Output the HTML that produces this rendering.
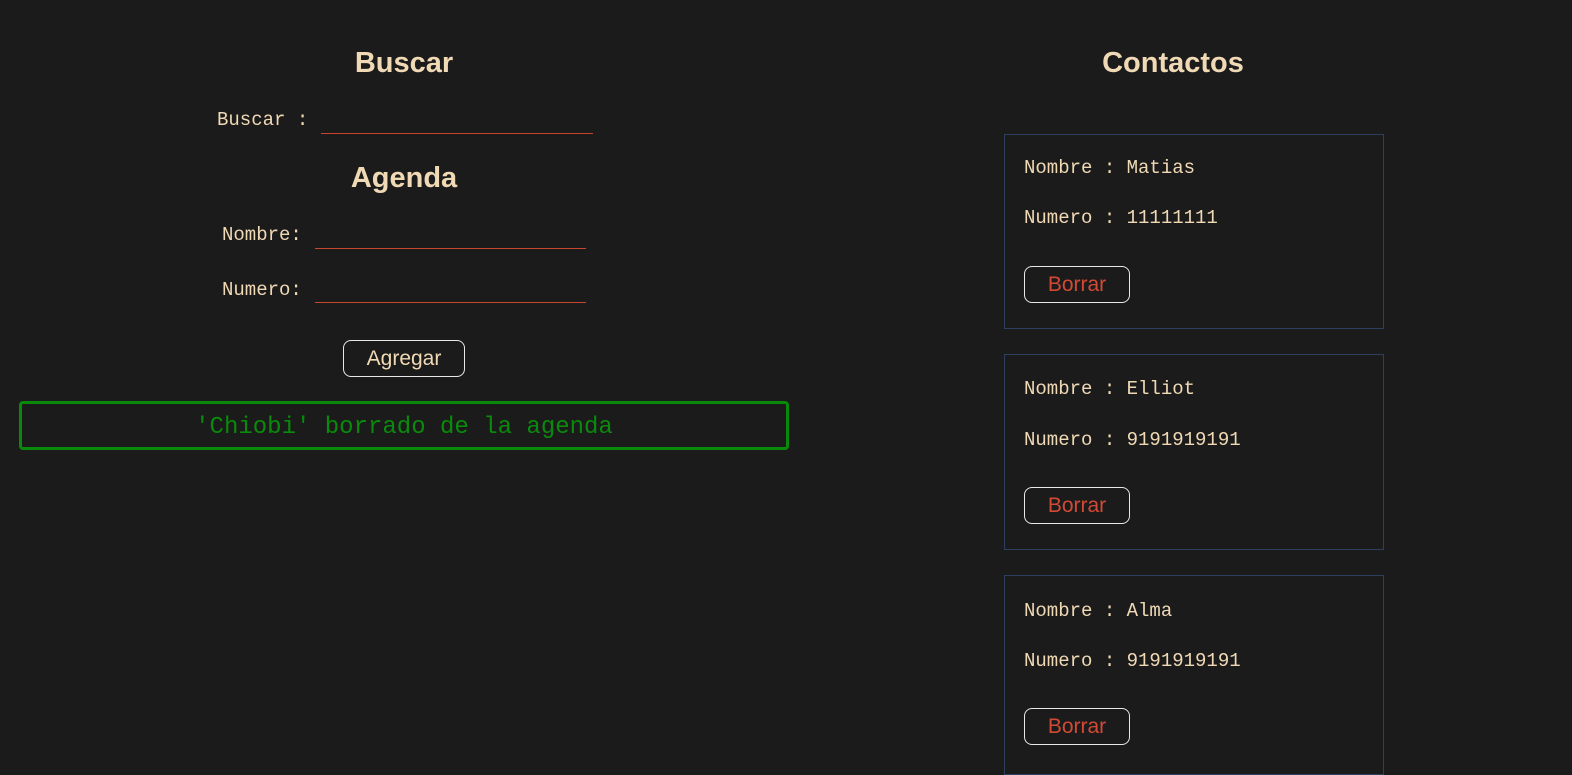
<!DOCTYPE html>
<html><head><style>
html,body{margin:0;background:#1b1b1b;width:1572px;height:736px;overflow:hidden}
*{box-sizing:border-box}
.a{position:absolute}
h2{position:absolute;margin:0;font:bold 29px "Liberation Sans",sans-serif;color:#f0d9b5;text-align:center;width:400px}
.m{font-family:"Liberation Mono",monospace;color:#f0d9b5;font-size:19px;white-space:pre}
.line{position:absolute;height:1px;background:#c9452f}
.btn{position:absolute;border:1px solid #e8e8e8;border-radius:8px;font:21px "Liberation Sans",sans-serif;text-align:center;line-height:35px}
.card{position:absolute;left:1004px;width:380px;border:1px solid #2e3f60}
</style></head><body>
<h2 style="left:204px;top:47px">Buscar</h2>
<div class="a m" style="left:217px;top:109px">Buscar :</div>
<div class="line" style="left:321px;top:133px;width:272px"></div>
<h2 style="left:204px;top:162px">Agenda</h2>
<div class="a m" style="left:222px;top:224px">Nombre:</div>
<div class="line" style="left:315px;top:248px;width:271px"></div>
<div class="a m" style="left:222px;top:279px">Numero:</div>
<div class="line" style="left:315px;top:302px;width:271px"></div>
<div class="btn" style="left:343px;top:340px;width:122px;height:37px;color:#f0d9b5">Agregar</div>
<div class="a" style="left:19px;top:401px;width:770px;height:49px;border:3px solid #0a8a0a;border-radius:4px;font:24px 'Liberation Mono',monospace;color:#0a8a0a;text-align:center;line-height:48px">'Chiobi' borrado de la agenda</div>

<h2 style="left:973px;top:47px">Contactos</h2>

<div class="card" style="top:134px;height:195px">
<div class="a m" style="left:19px;top:22px">Nombre : Matias</div>
<div class="a m" style="left:19px;top:72px">Numero : 11111111</div>
<div class="btn" style="left:19px;top:131px;width:106px;height:37px;color:#d24a34">Borrar</div>
</div>
<div class="card" style="top:354px;height:196px">
<div class="a m" style="left:19px;top:23px">Nombre : Elliot</div>
<div class="a m" style="left:19px;top:74px">Numero : 9191919191</div>
<div class="btn" style="left:19px;top:132px;width:106px;height:37px;color:#d24a34">Borrar</div>
</div>
<div class="card" style="top:575px;height:200px">
<div class="a m" style="left:19px;top:24px">Nombre : Alma</div>
<div class="a m" style="left:19px;top:74px">Numero : 9191919191</div>
<div class="btn" style="left:19px;top:132px;width:106px;height:37px;color:#d24a34">Borrar</div>
</div>
</body></html>
